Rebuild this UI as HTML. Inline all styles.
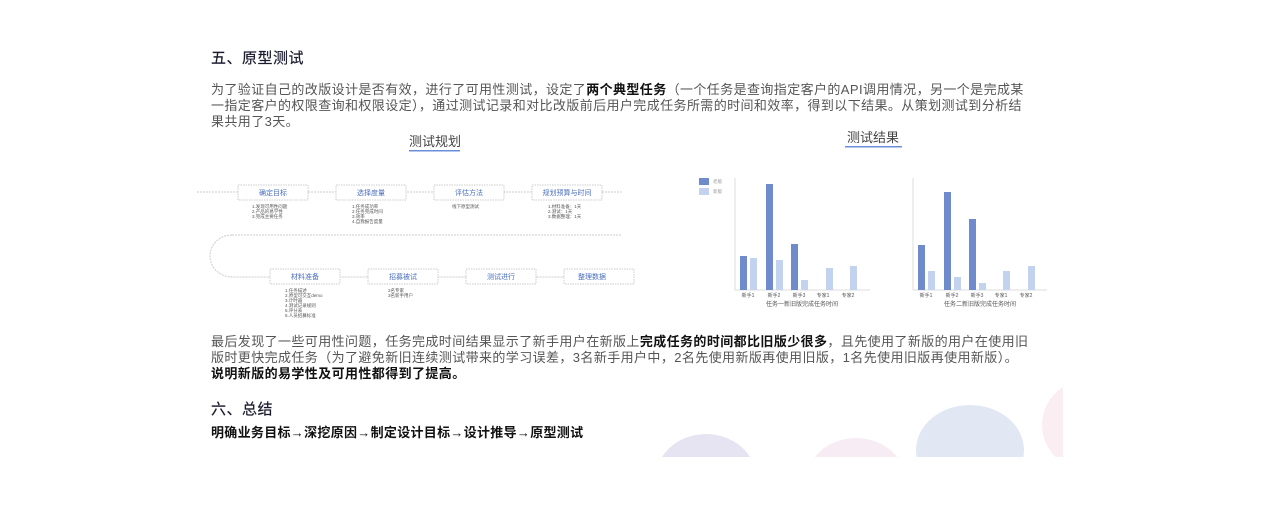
<!DOCTYPE html>
<html><head><meta charset="utf-8"><style>
body{margin:0;width:1280px;height:517px;background:#fff;position:relative;overflow:hidden;font-family:"Liberation Sans","Noto Sans CJK SC",sans-serif}
.t{position:absolute;white-space:nowrap;font-size:13px;letter-spacing:0.4px;color:#555;line-height:16px}
.h{position:absolute;font-size:15px;color:#1a1a2e;white-space:nowrap;letter-spacing:0.5px;-webkit-text-stroke:0.2px #1a1a2e}
b{color:#111}
</style></head><body>
<div class="h" style="left:211px;top:47px">五、原型测试</div>
<div class="t" style="left:211px;top:82px">为了验证自己的改版设计是否有效，进行了可用性测试，设定了<b>两个典型任务</b>（一个任务是查询指定客户的API调用情况，另一个是完成某</div>
<div class="t" style="left:211px;top:98px">一指定客户的权限查询和权限设定），通过测试记录和对比改版前后用户完成任务所需的时间和效率，得到以下结果。从策划测试到分析结</div>
<div class="t" style="left:211px;top:114px">果共用了3天。</div>

<svg style="position:absolute;left:0;top:0" width="1280" height="517" font-family="Liberation Sans,Noto Sans CJK SC,sans-serif">
<text x="435" y="146" font-size="13" fill="#444" text-anchor="middle">测试规划</text>
<rect x="409" y="150" width="51" height="1.5" fill="#6a8fd8"/>
<g stroke="#ccc" stroke-dasharray="2,1" fill="none">
<line x1="197" y1="192" x2="622" y2="192"/>
<line x1="232" y1="235" x2="622" y2="235"/>
<path d="M232 235 A22 21 0 0 0 232 277 L622 277"/>
</g>
<g fill="#fff" stroke="#ccc" stroke-dasharray="1.5,1">
<rect x="238" y="185" width="70" height="15"/><rect x="336" y="185" width="70" height="15"/><rect x="434" y="185" width="70" height="15"/><rect x="532" y="185" width="70" height="15"/>
<rect x="270" y="269" width="70" height="15"/><rect x="368" y="269" width="70" height="15"/><rect x="466" y="269" width="70" height="15"/><rect x="564" y="269" width="70" height="15"/>
</g>
<g font-size="7" fill="#4a6fc0" text-anchor="middle">
<text x="273" y="195">确定目标</text><text x="371" y="195">选择度量</text><text x="469" y="195">评估方法</text><text x="567" y="195">规划预算与时间</text>
<text x="305" y="279">材料准备</text><text x="403" y="279">招募被试</text><text x="501" y="279">测试进行</text><text x="592" y="279">整理数据</text>
</g>
<g font-size="4.5" fill="#555">
<text x="252" y="208">1.发现可用性问题</text><text x="252" y="213">2.产品的易学性</text><text x="252" y="218">3.完成主要任务</text>
<text x="352" y="208">1.任务成功率</text><text x="352" y="213">2.任务完成时间</text><text x="352" y="218">3.效率</text><text x="352" y="223">4.自我报告度量</text>
<text x="452" y="208">线下原型测试</text>
<text x="548" y="208">1.材料准备：1天</text><text x="548" y="213">2.测试：1天</text><text x="548" y="218">3.数据整理：1天</text>
<text x="285" y="292">1.任务描述</text><text x="285" y="297">2.原型可交互demo</text><text x="285" y="302">3.计时器</text><text x="285" y="307">4.测试记录规则</text><text x="285" y="312">5.评分表</text><text x="285" y="317">6.人员招募标准</text>
<text x="388" y="292">2名专家</text><text x="388" y="297">3名新手用户</text>
</g>
<text x="873" y="142" font-size="13" fill="#444" text-anchor="middle">测试结果</text>
<rect x="845" y="146" width="57" height="1.5" fill="#6a8fd8"/>
<rect x="699" y="178" width="10" height="7" fill="#6f8bcc"/><rect x="699" y="188" width="10" height="7" fill="#c3d2ee"/>
<text x="713" y="183" font-size="4.5" fill="#999">老版</text><text x="713" y="193" font-size="4.5" fill="#999">新版</text>
<g stroke="#ddd"><line x1="735" y1="178" x2="735" y2="290"/><line x1="735" y1="290" x2="870" y2="290"/><line x1="913" y1="178" x2="913" y2="290"/><line x1="913" y1="290" x2="1047" y2="290"/></g>
<g fill="#6f8bcc">
<rect x="740" y="256" width="7" height="34"/><rect x="766" y="184" width="7" height="106"/><rect x="791" y="244" width="7" height="46"/>
<rect x="918" y="245" width="7" height="45"/><rect x="944" y="192" width="7" height="98"/><rect x="969" y="219" width="7" height="71"/>
</g>
<g fill="#c3d2ee">
<rect x="750" y="258" width="7" height="32"/><rect x="776" y="260" width="7" height="30"/><rect x="801" y="280" width="7" height="10"/><rect x="826" y="268" width="7" height="22"/><rect x="850" y="266" width="7" height="24"/>
<rect x="928" y="271" width="7" height="19"/><rect x="954" y="277" width="7" height="13"/><rect x="979" y="283" width="7" height="7"/><rect x="1003" y="271" width="7" height="19"/><rect x="1028" y="266" width="7" height="24"/>
</g>
<g font-size="5" fill="#555" text-anchor="middle">
<text x="748" y="297">新手1</text><text x="774" y="297">新手2</text><text x="799" y="297">新手3</text><text x="823" y="297">专家1</text><text x="848" y="297">专家2</text>
<text x="926" y="297">新手1</text><text x="952" y="297">新手2</text><text x="977" y="297">新手3</text><text x="1001" y="297">专家1</text><text x="1026" y="297">专家2</text>
<text x="802" y="306" font-size="6">任务一新旧版完成任务时间</text><text x="980" y="306" font-size="6">任务二新旧版完成任务时间</text>
</g>
<defs><clipPath id="c"><rect x="0" y="0" width="1063" height="457"/></clipPath></defs>
<g clip-path="url(#c)">
<ellipse cx="706" cy="478" rx="50" ry="44" fill="#e6e4f2"/>
<ellipse cx="856" cy="482" rx="50" ry="44" fill="#f8ecf4"/>
<ellipse cx="970" cy="450" rx="54" ry="45" fill="#e2e8f3"/>
<ellipse cx="1090" cy="425" rx="48" ry="46" fill="#fbeef2"/>
</g>
</svg>

<div class="t" style="left:211px;top:334px">最后发现了一些可用性问题，任务完成时间结果显示了新手用户在新版上<b>完成任务的时间都比旧版少很多</b>，且先使用了新版的用户在使用旧</div>
<div class="t" style="left:211px;top:350px">版时更快完成任务（为了避免新旧连续测试带来的学习误差，3名新手用户中，2名先使用新版再使用旧版，1名先使用旧版再使用新版）。</div>
<div class="t" style="left:211px;top:366px"><b>说明新版的易学性及可用性都得到了提高。</b></div>
<div class="h" style="left:211px;top:398px">六、总结</div>
<div class="t" style="left:211px;top:425px;letter-spacing:0.3px"><b>明确业务目标→深挖原因→制定设计目标→设计推导→原型测试</b></div>
</body></html>
